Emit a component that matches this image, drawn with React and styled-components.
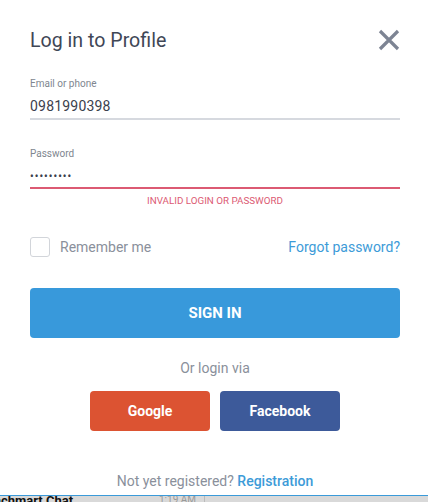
import React from 'react'
import styled, { createGlobalStyle } from 'styled-components'

const GlobalStyle = createGlobalStyle`
  html, body {
    margin: 0;
    padding: 0;
    background: #ffffff;
    font-family: Roboto, "Liberation Sans", Arial, sans-serif;
  }
`

const Page = styled.div`
  width: 428px;
  height: 502px;
  display: flex;
  flex-direction: column;
  overflow: hidden;
`

const Modal = styled.div`
  flex: 1;
  padding: 0 28px 0 30px;
  display: flex;
  flex-direction: column;
`

const Header = styled.div`
  display: flex;
  justify-content: space-between;
  align-items: center;
  padding-top: 27px;
  height: 26px;
`

const Title = styled.h1`
  margin: 0;
  font-size: 19.6px;
  font-weight: 400;
  color: #3f4756;
`

const Close = styled.button`
  border: none;
  background: none;
  padding: 0;
  width: 24px;
  height: 24px;
  display: flex;
  cursor: pointer;
  margin-right: -1px;
`

const Field = styled.div`
  display: flex;
  flex-direction: column;
  margin-top: ${p => p.top}px;
  border-bottom: 2px solid ${p => (p.error ? '#dc5a73' : '#d6d9df')};
`

const Label = styled.label`
  font-size: 10px;
  color: #80868f;
  line-height: 12px;
`

const Value = styled.div`
  font-size: 14px;
  color: #3a404c;
  line-height: 18px;
  margin-top: 7px;
  padding-bottom: 3px;
  letter-spacing: 0.2px;
`

const Dots = styled.div`
  font-size: 10px;
  color: #3a404c;
  line-height: 14px;
  margin-top: 10px;
  padding-bottom: 3px;
  letter-spacing: 1.1px;
  font-weight: 700;
`

const ErrorText = styled.div`
  text-align: center;
  font-size: 9.8px;
  color: #dc5a73;
  margin-top: 6px;
`

const OptionsRow = styled.div`
  display: flex;
  justify-content: space-between;
  align-items: center;
  margin-top: 31px;
`

const Remember = styled.label`
  display: flex;
  align-items: center;
  gap: 10px;
  font-size: 14px;
  color: #8a909b;
`

const Box = styled.span`
  width: 18px;
  height: 18px;
  border: 1px solid #d2d5da;
  border-radius: 3px;
  background: #fff;
`

const Link = styled.a`
  font-size: 14px;
  color: #3d9bd8;
  text-decoration: none;
  font-weight: ${p => (p.bold ? 500 : 400)};
`

const SignIn = styled.button`
  margin-top: 31px;
  height: 50px;
  width: 100%;
  border: none;
  border-radius: 4px;
  background: #3899db;
  color: #fff;
  font-family: inherit;
  font-size: 15px;
  font-weight: 700;
`

const Muted = styled.div`
  text-align: center;
  font-size: 14px;
  color: #8a909b;
  margin-top: ${p => p.top}px;
`

const Socials = styled.div`
  display: flex;
  justify-content: center;
  gap: 10px;
  margin-top: 15px;
`

const Social = styled.button`
  width: 120px;
  height: 40px;
  border: none;
  border-radius: 4px;
  background: ${p => p.bg};
  color: #fff;
  font-family: inherit;
  font-size: 14px;
  font-weight: 700;
`

const Taskbar = styled.div`
  height: 6px;
  border-top: 1px solid #3a9ad9;
  background: #d9d9d9;
  display: flex;
  align-items: flex-start;
  overflow: hidden;
  font-size: 13px;
  line-height: 13px;
`

const TaskTitle = styled.span`
  font-weight: 700;
  color: #111;
  margin-left: -6px;
  margin-top: -2px;
  width: 165px;
`

const TaskTime = styled.span`
  font-size: 10px;
  color: #999;
  margin-top: -3px;
  padding-right: 8px;
  border-right: 1px solid #bbb;
`

export default function App() {
  return (
    <Page>
      <GlobalStyle />
      <Modal>
        <Header>
          <Title>Log in to Profile</Title>
          <Close aria-label="close">
            <svg width="24" height="24" viewBox="0 0 24 24">
              <path d="M3 3L21 21M21 3L3 21" stroke="#7d8493" strokeWidth="3.2" />
            </svg>
          </Close>
        </Header>
        <Field top={25}>
          <Label>Email or phone</Label>
          <Value>0981990398</Value>
        </Field>
        <Field top={28} error>
          <Label>Password</Label>
          <Dots>•••••••••</Dots>
        </Field>
        <ErrorText>INVALID LOGIN OR PASSWORD</ErrorText>
        <OptionsRow>
          <Remember>
            <Box />
            Remember me
          </Remember>
          <Link href="#">Forgot password?</Link>
        </OptionsRow>
        <SignIn>SIGN IN</SignIn>
        <Muted top={22}>Or login via</Muted>
        <Socials>
          <Social bg="#dc5332">Google</Social>
          <Social bg="#3d5a9a">Facebook</Social>
        </Socials>
        <Muted top={42}>
          Not yet registered? <Link bold href="#">Registration</Link>
        </Muted>
      </Modal>
      <Taskbar>
        <TaskTitle>achmart Chat</TaskTitle>
        <TaskTime>1:19 AM</TaskTime>
      </Taskbar>
    </Page>
  )
}
